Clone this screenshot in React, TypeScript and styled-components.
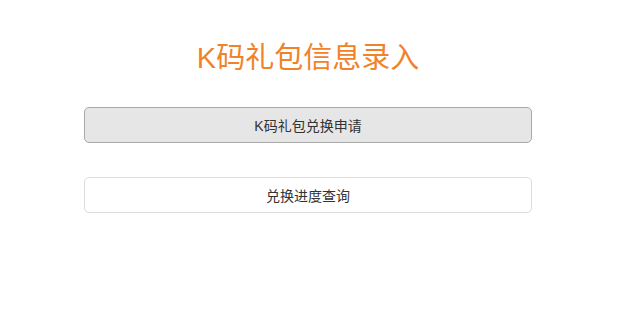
import React from "react";
import styled, { createGlobalStyle } from "styled-components";

const Global = createGlobalStyle`
  html, body { margin: 0; padding: 0; background: #fff; }
  body { font-family: "Liberation Sans", Arial, "Noto Sans CJK SC", sans-serif; }
`;

const Page = styled.div`
  width: 616px;
  height: 312px;
  display: flex;
  flex-direction: column;
  align-items: center;
  padding-top: 40px;
  box-sizing: border-box;
`;

const Title = styled.h1`
  margin: 0;
  font-size: 29px;
  font-weight: normal;
  line-height: 36px;
  color: #f0832a;
  font-family: "Liberation Sans", Arial, "Noto Sans CJK SC", sans-serif;
`;

const Buttons = styled.div`
  width: 448px;
  margin-top: 31px;
  display: flex;
  flex-direction: column;
  gap: 34px;
`;

const Btn = styled.button<{ $active?: boolean }>`
  height: 36px;
  width: 100%;
  border-radius: 5px;
  border: 1px solid ${(p) => (p.$active ? "#a9a9a9" : "#dcdcdc")};
  background: ${(p) => (p.$active ? "#e6e6e6" : "#ffffff")};
  color: #333;
  font-size: 14px;
  font-family: "Liberation Sans", Arial, "Noto Sans CJK SC", sans-serif;
  padding: 0;
  cursor: pointer;
`;

export default function App() {
  return (
    <>
      <Global />
      <Page>
        <Title>K码礼包信息录入</Title>
        <Buttons>
          <Btn $active>K码礼包兑换申请</Btn>
          <Btn>兑换进度查询</Btn>
        </Buttons>
      </Page>
    </>
  );
}
